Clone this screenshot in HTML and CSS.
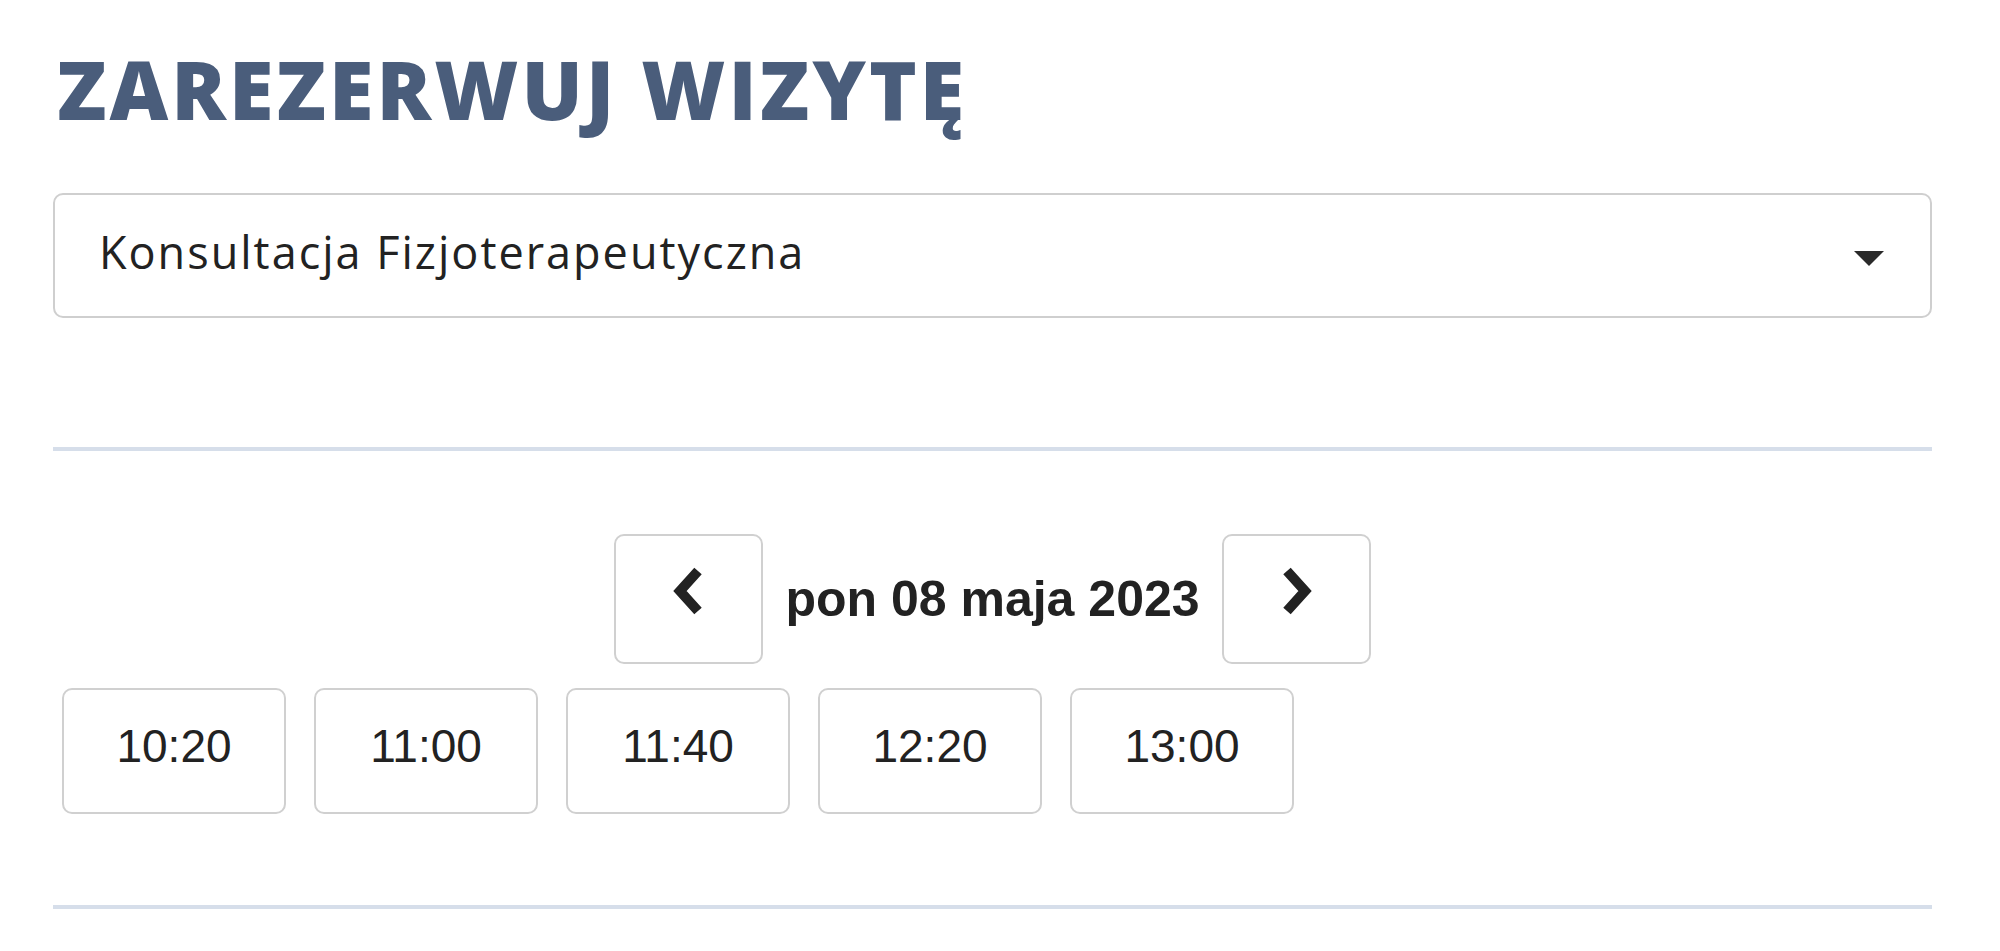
FILE: index.html
```html
<!DOCTYPE html>
<html>
  <head>
    <meta charset="utf-8" />
    <meta name="viewport" content="width=device-width, initial-scale=1" />
    <title>Zarezerwuj wizytę</title>
    <link rel="stylesheet" href="styles.css">
  </head>

  <body>
    <div id="booking">
      <h1 id="header">ZAREZERWUJ WIZYTĘ</h1>

      <div class="select-box">
        <span class="select-value">Konsultacja Fizjoterapeutyczna</span>
        <span class="caret"></span>
      </div>

      <hr class="divider" />

      <div class="day-nav">
        <button class="nav-btn" aria-label="poprzedni dzień">
          <svg width="32" height="50" viewBox="0 0 32 50">
            <polyline points="25,5 7,25 25,45" fill="none" stroke="#222" stroke-width="10" stroke-linejoin="miter" />
          </svg>
        </button>
        <span class="day-label">pon 08 maja 2023</span>
        <button class="nav-btn" aria-label="następny dzień">
          <svg width="32" height="50" viewBox="0 0 32 50">
            <polyline points="7,5 25,25 7,45" fill="none" stroke="#222" stroke-width="10" stroke-linejoin="miter" />
          </svg>
        </button>
      </div>

      <div class="slots">
        <button class="slot">10:20</button>
        <button class="slot">11:00</button>
        <button class="slot">11:40</button>
        <button class="slot">12:20</button>
        <button class="slot">13:00</button>
      </div>

      <hr class="divider last" />
    </div>
  </body>
</html>
```

FILE: styles.css
```css
* {
  box-sizing: border-box;
}

body {
  margin: 0;
  background-color: white;
  font-family: "Open Sans", sans-serif;
  color: #222;
}

#booking {
  padding: 40px 68px 0 53px;
}

#header {
  margin: 0 0 56px 4px;
  font-size: 81px;
  line-height: 97px;
  font-weight: 800;
  letter-spacing: 3px;
  color: #4a5d7b;
}

.select-box {
  display: flex;
  align-items: center;
  justify-content: space-between;
  height: 125px;
  padding: 0 46px 0 44px;
  border: 2px solid #cfcfcf;
  border-radius: 10px;
}

.select-value {
  font-size: 45px;
  letter-spacing: 2px;
  margin-top: -8px;
}

/* the little down arrow of the dropdown */
.caret {
  width: 0;
  height: 0;
  border-left: 15px solid transparent;
  border-right: 15px solid transparent;
  border-top: 15px solid #2a2a2a;
  margin-top: 6px;
}

.divider {
  margin: 129px 0 0 0;
  border: 0;
  border-top: 4px solid #d6deea;
}

.divider.last {
  margin-top: 91px;
}

.day-nav {
  display: flex;
  align-items: center;
  justify-content: center;
  margin-top: 83px;
}

.nav-btn {
  display: flex;
  align-items: center;
  justify-content: center;
  width: 149px;
  height: 130px;
  padding: 0 0 16px 0;
  background-color: white;
  border: 2px solid #d0d0d0;
  border-radius: 10px;
}

.day-label {
  margin: 0 22px;
  font-family: "Liberation Sans", sans-serif;
  font-size: 50px;
  font-weight: 700;
}

.slots {
  display: flex;
  gap: 28px;
  margin: 24px 0 0 9px;
}

.slot {
  width: 224px;
  height: 126px;
  padding: 0 0 10px 0;
  background-color: white;
  border: 2px solid #d0d0d0;
  border-radius: 10px;
  font-family: "Liberation Sans", sans-serif;
  font-size: 46px;
  color: #222;
}
```
